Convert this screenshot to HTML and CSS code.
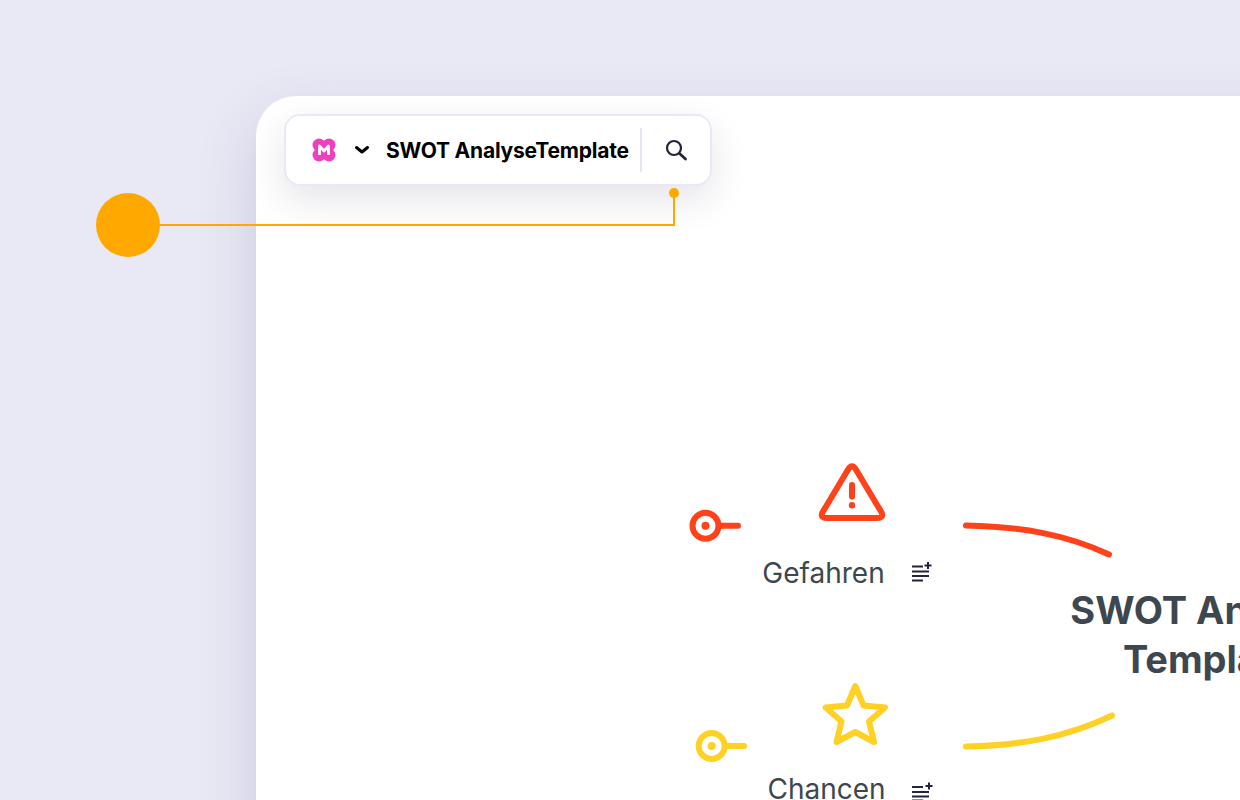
FILE: index.html
```html
<!DOCTYPE html>
<html lang="de">
<head>
    <meta charset="UTF-8">
    <meta name="viewport" content="width=device-width, initial-scale=1.0">
    <title>SWOT Analyse Template</title>
    <link rel="stylesheet" href="styles.css">
</head>
<body>
    <div class="board">
        <div class="toolbar">
            <svg class="logo" width="24" height="24" viewBox="0 0 24 24">
                <g fill="#f03fbe">
                    <circle cx="7" cy="7" r="6.500"/>
                    <circle cx="17" cy="7" r="6.500"/>
                    <circle cx="7" cy="17" r="6.500"/>
                    <circle cx="17" cy="17" r="6.500"/>
                    <rect x="3" y="3" width="18" height="18"/>
                </g>
                <path fill="none" stroke="#fff" stroke-width="2.800" stroke-linejoin="round" d="M7.500 17v-9l4.500 5 4.500-5v9"/>
            </svg>
            <svg class="chevron" width="16" height="10" viewBox="0 0 16 10">
                <path fill="none" stroke="#000" stroke-width="3" stroke-linecap="round" stroke-linejoin="round" d="M2.500 2.500l5.500 4.500 5.500-4.500"/>
            </svg>
            <span class="map-title">SWOT AnalyseTemplate</span>
            <span class="divider"></span>
            <svg class="search" width="24" height="24" viewBox="0 0 24 24">
                <circle cx="10" cy="10" r="7" fill="none" stroke="#23233c" stroke-width="2.200"/>
                <path fill="none" stroke="#23233c" stroke-width="2.800" stroke-linecap="round" d="M15.500 15.500l6 5.500"/>
            </svg>
        </div>

        <!-- mindmap canvas -->
        <div class="node node-threat">
            <svg class="node-icon" width="72" height="60" viewBox="0 0 72 60">
                <path fill="none" stroke="#ff4219" stroke-width="6" stroke-linejoin="round" d="M31.500 7.500Q36 -1 40.500 7.500L63.500 46Q70 55 61 55H11Q2 55 8.500 46Z"/>
                <path fill="none" stroke="#ff4219" stroke-width="6" stroke-linecap="round" d="M36 22v11.500"/>
                <circle cx="36" cy="42.300" r="3.200" fill="#ff4219"/>
            </svg>
            <span class="node-label">Gefahren</span>
        </div>
        <div class="node node-chance">
            <svg class="node-icon" width="70" height="66" viewBox="0 0 70 66">
                <path fill="none" stroke="#ffd124" stroke-width="6" stroke-linejoin="round" stroke-linecap="round" d="M35.300 4L43.500 23.500 65 25.500 49 39.500 54 60 35.300 50 16.500 60 21.500 39.500 5.700 25.500 27 23.500Z"/>
            </svg>
            <span class="node-label">Chancen</span>
        </div>
        <svg class="links" width="984" height="704" viewBox="0 0 984 704">
            <g fill="none" stroke="#ff4219" stroke-width="6" stroke-linecap="round">
                <circle cx="449.500" cy="429.700" r="13"/>
                <path d="M463 429.700h19"/>
                <path d="M710 429.500c55 1 100 9 143 29"/>
            </g>
            <circle cx="449.500" cy="429.700" r="4" fill="#ff4219"/>
            <g fill="none" stroke="#ffd124" stroke-width="6" stroke-linecap="round">
                <circle cx="455.700" cy="650" r="13"/>
                <path d="M469 650h19"/>
                <path d="M710 650.500c55-1 100-9 146-31"/>
            </g>
            <circle cx="455.700" cy="650" r="4" fill="#ffd124"/>
            <g fill="none" stroke="#23233c" stroke-width="2">
                <path d="M656 470.500h11M656 475.500h17M656 480h17M656 484.500h11"/>
                <path d="M668.500 469.500h7M672 466v7"/>
                <path d="M656 691h11M656 696h17M656 700.500h17M656 704.500h11"/>
                <path d="M669.500 690h7M673 686.500v7"/>
            </g>
        </svg>
        <div class="root-title">SWOT Analyse<br>Template</div>
    </div>

    <svg class="callout" width="600" height="70" viewBox="0 0 600 70">
        <circle cx="32" cy="32" r="32" fill="#ffa900"/>
        <path fill="none" stroke="#ffa900" stroke-width="2" d="M60 32h518V0"/>
        <circle cx="578" cy="0" r="5" fill="#ffa900"/>
    </svg>
</body>
</html>
```

FILE: styles.css
```css
html, body {
    height: 100%;
}
body {
    margin: 0;
    padding: 96px 0 0 256px;
    box-sizing: border-box;
    overflow: hidden;
    position: relative;
    background-color: #e9e9f5;
    font-family: Inter, sans-serif;
}
.board {
    position: relative;
    width: 1200px;
    height: 900px;
    border-radius: 40px 0 0 0;
    background-color: #fff;
    box-shadow: 0 24px 60px rgba(70, 70, 130, 0.2);
}
.toolbar {
    position: absolute;
    top: 18px;
    left: 28px;
    display: flex;
    align-items: center;
    height: 72px;
    width: 428px;
    padding-left: 25px;
    box-sizing: border-box;
    border: 2px solid #e9e9f5;
    border-radius: 16px;
    background-color: #fff;
    box-shadow: 0 14px 36px rgba(40, 40, 70, 0.12);
}
.logo {
    flex: none;
    margin-left: 1px;
}
.chevron {
    flex: none;
    margin-left: 18px;
}
.map-title {
    margin-left: 16px;
    font-size: 21px;
    font-weight: 700;
    letter-spacing: -0.2px;
    white-space: nowrap;
    color: #000;
}
.divider {
    flex: none;
    width: 2px;
    height: 44px;
    margin-left: 11px;
    background-color: #e6e6f2;
}
.search {
    flex: none;
    margin-left: 22px;
}
.links {
    position: absolute;
    top: 0;
    left: 0;
    pointer-events: none;
}
.node {
    position: absolute;
    width: 170px;
    text-align: center;
}
.node-threat {
    top: 367px;
    left: 495px;
}
.node-chance {
    top: 586px;
    left: 500px;
}
.node-icon {
    display: block;
}
.node-threat .node-icon {
    margin-left: 65px;
}
.node-chance .node-icon {
    margin-left: 64px;
}
.node-label {
    display: block;
    width: 135px;
    font-size: 28px;
    line-height: 34px;
    color: #3e4750;
}
.node-threat .node-label {
    margin-top: 33px;
    margin-left: 5px;
}
.node-chance .node-label {
    margin-top: 24px;
    margin-left: 3px;
}
.root-title {
    position: absolute;
    top: 490px;
    left: 803px;
    width: 300px;
    font-size: 38px;
    line-height: 49px;
    font-weight: 700;
    white-space: nowrap;
    text-align: center;
    color: #3e4750;
}
.callout {
    position: absolute;
    top: 193px;
    left: 96px;
    overflow: visible;
}
```
